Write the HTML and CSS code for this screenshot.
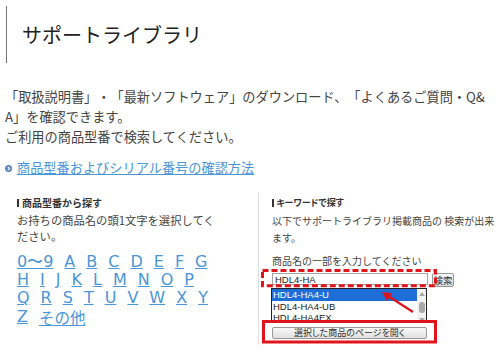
FILE: index.html
```html
<!DOCTYPE html>
<html lang="ja">

<head>
    <meta charset="UTF-8">
    <title>サポートライブラリ</title>
    <link rel="stylesheet" href="styles.css">
</head>

<body>
    <div class="page">
        <h1 class="page-title">サポートライブラリ</h1>
        <p class="lead">「取扱説明書」・「最新ソフトウェア」のダウンロード、「よくあるご質問・Q&amp;A」を確認できます。<br>ご利用の商品型番で検索してください。</p>
        <p class="serial">
            <svg class="bullet" width="7" height="7" viewBox="0 0 7 7">
                <circle cx="3.5" cy="3.5" r="3.5" fill="#5f86bd" />
                <path d="M2.8 1.8 L4.6 3.5 L2.8 5.2" stroke="#fff" stroke-width="1.1" fill="none" />
            </svg>
            <a href="#" class="serial-link">商品型番およびシリアル番号の確認方法</a>
        </p>

        <div class="columns">
            <div class="col col-left">
                <h2 class="col-head">商品型番から探す</h2>
                <p class="col-text">お持ちの商品名の頭1文字を選択してください。</p>
                <ul class="letters">
                    <li><a href="#">0〜9</a></li>
                    <li><a href="#">A</a></li>
                    <li><a href="#">B</a></li>
                    <li><a href="#">C</a></li>
                    <li><a href="#">D</a></li>
                    <li><a href="#">E</a></li>
                    <li><a href="#">F</a></li>
                    <li><a href="#">G</a></li>
                    <li><a href="#">H</a></li>
                    <li><a href="#">I</a></li>
                    <li><a href="#">J</a></li>
                    <li><a href="#">K</a></li>
                    <li><a href="#">L</a></li>
                    <li><a href="#">M</a></li>
                    <li><a href="#">N</a></li>
                    <li><a href="#">O</a></li>
                    <li><a href="#">P</a></li>
                    <li><a href="#">Q</a></li>
                    <li><a href="#">R</a></li>
                    <li><a href="#">S</a></li>
                    <li><a href="#">T</a></li>
                    <li><a href="#">U</a></li>
                    <li><a href="#">V</a></li>
                    <li><a href="#">W</a></li>
                    <li><a href="#">X</a></li>
                    <li><a href="#">Y</a></li>
                    <li><a href="#">Z</a></li>
                    <li><a href="#" class="other">その他</a></li>
                </ul>
            </div>

            <div class="col col-right">
                <h2 class="col-head small">キーワードで探す</h2>
                <p class="kw-text">以下でサポートライブラリ掲載商品の 検索が出来ます。</p>
                <p class="kw-label">商品名の一部を入力してください</p>
                <div class="search-form">
                    <div class="search-row">
                        <input type="text" class="search-input" value="HDL4-HA">
                        <button class="search-btn">検索</button>
                    </div>
                    <div class="result-list">
                        <div class="options">
                            <div class="option selected">HDL4-HA4-U</div>
                            <div class="option">HDL4-HA4-UB</div>
                            <div class="option">HDL4-HA4EX</div>
                        </div>
                        <div class="scrollbar">
                            <span class="arrow-up"></span>
                            <span class="thumb"></span>
                            <span class="arrow-down"></span>
                        </div>
                    </div>
                    <button class="open-btn">選択した商品のページを開く</button>

                    <!-- 注釈（赤枠・矢印） -->
                    <svg class="marks" width="180" height="80" viewBox="0 0 180 80">
                        <rect x="2.5" y="2.5" width="173" height="15.3" fill="none" stroke="#e0141b" stroke-width="3" stroke-dasharray="6 3" />
                        <rect x="3.5" y="53.5" width="172" height="20.5" fill="none" stroke="#e0141b" stroke-width="3" />
                        <line x1="153" y1="44" x2="129" y2="28.5" stroke="#e0141b" stroke-width="2.2" />
                        <polygon points="122,24 132.2,25.2 127,33" fill="#e0141b" />
                    </svg>
                </div>
            </div>
        </div>
    </div>
</body>

</html>
```

FILE: styles.css
```css
body {
    margin: 0;
    font-family: "Noto Sans CJK JP", "Noto Sans", sans-serif;
    color: #444;
    background: #fff;
    text-spacing-trim: space-all;
}

.page {
    padding: 0 0 0 5px;
}

/* タイトル */
.page-title {
    margin: 6px 0 0 1px;
    height: 57px;
    line-height: 57px;
    padding-left: 15px;
    border-left: 1px solid #777;
    font-size: 20px;
    font-weight: normal;
    color: #222;
}

.lead {
    margin: 24px 0 0;
    padding-right: 10px;
    font-size: 13.2px;
    line-height: 20px;
    word-break: break-all;
}

.serial {
    margin: 11px 0 0;
    font-size: 13.2px;
    line-height: 20px;
    display: flex;
    align-items: center;
}

.bullet {
    margin-right: 5px;
}

.serial-link {
    color: #4a96d6;
    text-decoration: underline;
}

/* 2カラム */
.columns {
    display: flex;
    margin-top: 15px;
}

.col {
    padding-top: 3px;
    padding-bottom: 6px;
}

.col-left {
    flex: 0 0 241px;
    padding-left: 12px;
}

.col-right {
    flex: 1;
    border-left: 1px solid #ddd;
    padding-left: 13px;
}

.col-head {
    margin: 0;
    font-size: 10px;
    line-height: 14px;
    font-weight: bold;
    color: #333;
    display: flex;
    align-items: center;
}

.col-head::before {
    content: "";
    display: inline-block;
    width: 2px;
    height: 8px;
    background: #333;
    margin-right: 3px;
}

.col-head.small {
    font-size: 9px;
    font-feature-settings: "palt";
}

.col-head.small::before {
    width: 1.5px;
    margin-right: 3px;
}

.col-text {
    margin: 1.75px 0 0;
    width: 204px;
    font-size: 11.3px;
    line-height: 16.5px;
}

/* 頭文字リンク */
.letters {
    list-style: none;
    margin: 8px 0 0;
    padding: 0;
    width: 197px;
    display: flex;
    flex-wrap: wrap;
    column-gap: 11px;
    font-family: "DejaVu Sans", Verdana, sans-serif;
    font-size: 16px;
    line-height: 18.3px;
}

.letters a {
    color: #4a96d6;
    text-decoration: underline;
}

.letters .other {
    font-family: "Noto Sans CJK JP", sans-serif;
    font-size: 15.5px;
}

/* キーワード検索 */
.kw-text {
    margin: 1.5px 0 0;
    font-size: 10px;
    line-height: 17px;
    color: #444;
}

.kw-label {
    margin: 6.5px 0 0;
    font-size: 10px;
    line-height: 17px;
    color: #444;
}

.search-form {
    position: relative;
    margin-top: 4px;
    width: 182px;
}

.search-row {
    display: flex;
    gap: 4px;
    align-items: flex-start;
}

.search-input {
    box-sizing: border-box;
    width: 156px;
    height: 12px;
    margin: 0;
    padding: 0 2px;
    border: 1px solid #a5a5a5;
    font-family: "Liberation Sans", sans-serif;
    font-size: 9.5px;
    color: #222;
    outline: none;
}

.search-btn {
    box-sizing: border-box;
    width: 22px;
    height: 14px;
    margin: 0;
    padding: 0;
    border: 1px solid #999;
    border-radius: 2px;
    background: linear-gradient(#f6f6f6, #dedede);
    font-family: "Noto Sans CJK JP", sans-serif;
    font-size: 9.5px;
    line-height: 12px;
    color: #333;
}

.result-list {
    box-sizing: border-box;
    display: flex;
    width: 156px;
    height: 35px;
    margin: 1px 0 0 -1px;
    border: 1px solid #222;
    overflow: hidden;
    background: #fff;
}

.options {
    flex: 1;
}

.option {
    font-family: "Liberation Sans", sans-serif;
    font-size: 9.5px;
    line-height: 11.5px;
    padding-left: 1px;
    color: #222;
    white-space: nowrap;
}

.option.selected {
    background: #1e6ed8;
    color: #fff;
}

.scrollbar {
    flex: 0 0 9px;
    background: #f2f2f2;
    display: flex;
    flex-direction: column;
    align-items: center;
}

.arrow-up {
    margin-top: 3px;
    width: 0;
    height: 0;
    border-left: 3px solid transparent;
    border-right: 3px solid transparent;
    border-bottom: 4px solid #a8a8a8;
}

.thumb {
    margin-top: 6px;
    width: 6px;
    height: 11px;
    border-radius: 3px;
    background: #a8a8a8;
}

.arrow-down {
    margin-top: 5px;
    width: 0;
    height: 0;
    border-left: 3px solid transparent;
    border-right: 3px solid transparent;
    border-top: 4px solid #a8a8a8;
}

.open-btn {
    box-sizing: border-box;
    display: block;
    width: 155px;
    height: 12px;
    margin: 4px 0 0;
    padding: 0;
    border: 1px solid #999;
    border-radius: 2px;
    background: linear-gradient(#f8f8f8, #e0e0e0);
    font-family: "Noto Sans CJK JP", sans-serif;
    font-size: 9px;
    line-height: 10px;
    color: #333;
    font-feature-settings: "palt";
}

/* 注釈 */
.marks {
    position: absolute;
    left: -12px;
    top: -5px;
    pointer-events: none;
}
```
